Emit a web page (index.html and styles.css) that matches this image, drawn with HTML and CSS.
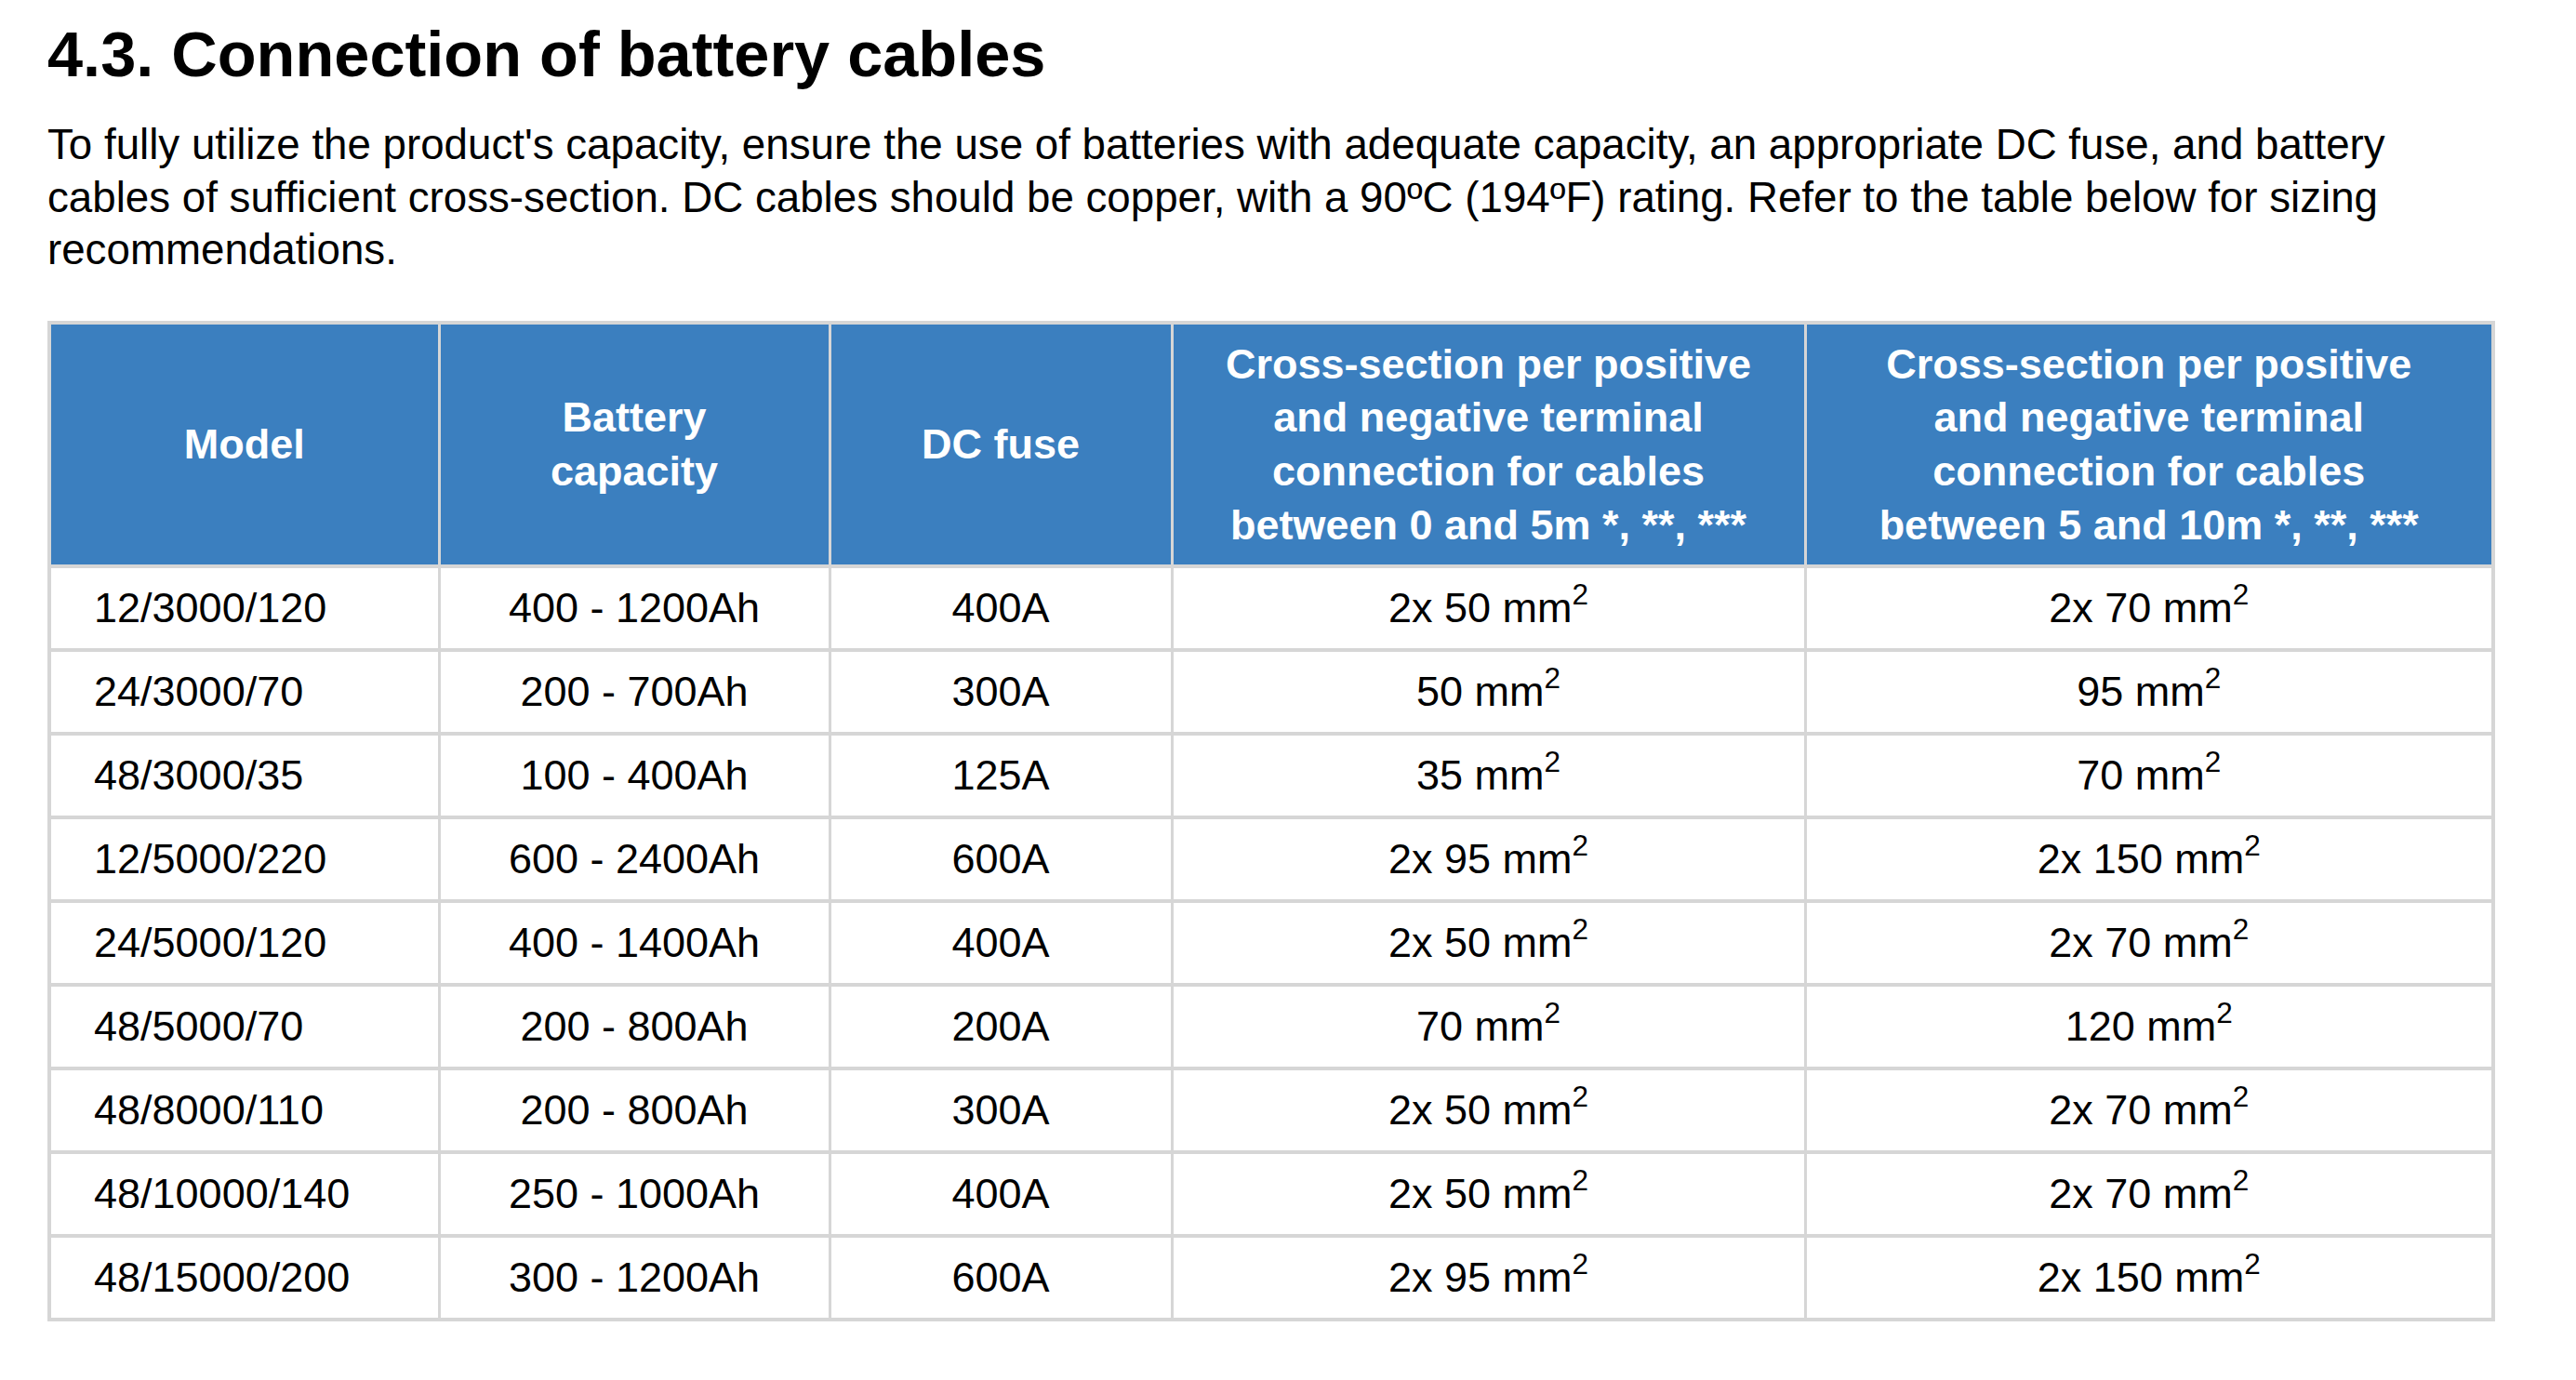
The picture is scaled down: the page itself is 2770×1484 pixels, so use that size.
FILE: index.html
```html
<!DOCTYPE html>
<html lang="en">
<head>
<meta charset="utf-8">
<title>Connection of battery cables</title>
<link rel="stylesheet" href="styles.css">
</head>
<body>
<main class="page">
  <h1 class="title">4.3. Connection of battery cables</h1>
  <p class="intro">To fully utilize the product's capacity, ensure the use of batteries with adequate capacity, an appropriate DC fuse, and battery cables of sufficient cross-section. DC cables should be copper, with a 90ºC (194ºF) rating. Refer to the table below for sizing recommendations.</p>
  <table class="spec">
    <colgroup>
      <col class="c1"><col class="c2"><col class="c3"><col class="c4"><col class="c5">
    </colgroup>
    <thead>
      <tr>
        <th>Model</th>
        <th>Battery<br>capacity</th>
        <th>DC fuse</th>
        <th>Cross-section per positive and negative terminal connection for cables between 0 and 5m *, **, ***</th>
        <th>Cross-section per positive and negative terminal connection for cables between 5 and 10m *, **, ***</th>
      </tr>
    </thead>
    <tbody>
      <tr><td class="model">12/3000/120</td><td>400 - 1200Ah</td><td>400A</td><td>2x 50 mm<sup>2</sup></td><td>2x 70 mm<sup>2</sup></td></tr>
      <tr><td class="model">24/3000/70</td><td>200 - 700Ah</td><td>300A</td><td>50 mm<sup>2</sup></td><td>95 mm<sup>2</sup></td></tr>
      <tr><td class="model">48/3000/35</td><td>100 - 400Ah</td><td>125A</td><td>35 mm<sup>2</sup></td><td>70 mm<sup>2</sup></td></tr>
      <tr><td class="model">12/5000/220</td><td>600 - 2400Ah</td><td>600A</td><td>2x 95 mm<sup>2</sup></td><td>2x 150 mm<sup>2</sup></td></tr>
      <tr><td class="model">24/5000/120</td><td>400 - 1400Ah</td><td>400A</td><td>2x 50 mm<sup>2</sup></td><td>2x 70 mm<sup>2</sup></td></tr>
      <tr><td class="model">48/5000/70</td><td>200 - 800Ah</td><td>200A</td><td>70 mm<sup>2</sup></td><td>120 mm<sup>2</sup></td></tr>
      <tr><td class="model">48/8000/110</td><td>200 - 800Ah</td><td>300A</td><td>2x 50 mm<sup>2</sup></td><td>2x 70 mm<sup>2</sup></td></tr>
      <tr><td class="model">48/10000/140</td><td>250 - 1000Ah</td><td>400A</td><td>2x 50 mm<sup>2</sup></td><td>2x 70 mm<sup>2</sup></td></tr>
      <tr><td class="model">48/15000/200</td><td>300 - 1200Ah</td><td>600A</td><td>2x 95 mm<sup>2</sup></td><td>2x 150 mm<sup>2</sup></td></tr>
    </tbody>
  </table>
</main>
</body>
</html>
```

FILE: styles.css
```css
html, body {
  margin: 0;
  padding: 0;
  background: #ffffff;
}

body {
  font-family: "Liberation Sans", Arial, Helvetica, sans-serif;
  color: #000000;
}

.page {
  padding: 20px 0 0 51px;
  width: 2628px;
}

.title {
  margin: 0;
  font-size: 68.5px;
  line-height: 78px;
  font-weight: 700;
}

.intro {
  margin: 30px 0 0 0;
  font-size: 45.7px;
  line-height: 56.7px;
  width: 2565px;
}

.spec {
  margin-top: 47px;
  border-collapse: collapse;
  table-layout: fixed;
  width: 2628px;
  border: 4px solid #d6d6d6;
}

.c1 { width: 419px; }
.c2 { width: 420px; }
.c3 { width: 368px; }
.c4 { width: 681px; }
.c5 { width: 740px; }

.spec th,
.spec td {
  border-top: 4px solid #d6d6d6;
  border-bottom: 4px solid #d6d6d6;
  border-left: 3px solid #d6d6d6;
  border-right: 3px solid #d6d6d6;
  text-align: center;
  vertical-align: middle;
  padding: 0 10px;
}

.spec th {
  background: #3b7fbf;
  color: #ffffff;
  font-size: 45px;
  font-weight: 700;
  line-height: 57.7px;
  height: 262px;
  padding: 0 40px;
  box-sizing: border-box;
}

.spec td {
  font-size: 45px;
  line-height: 52px;
  height: 90px;
  box-sizing: border-box;
}

.spec td.model {
  text-align: left;
  padding-left: 46px;
}

.spec sup {
  font-size: 0.7em;
  line-height: 0;
  vertical-align: 0.6em;
}
```
